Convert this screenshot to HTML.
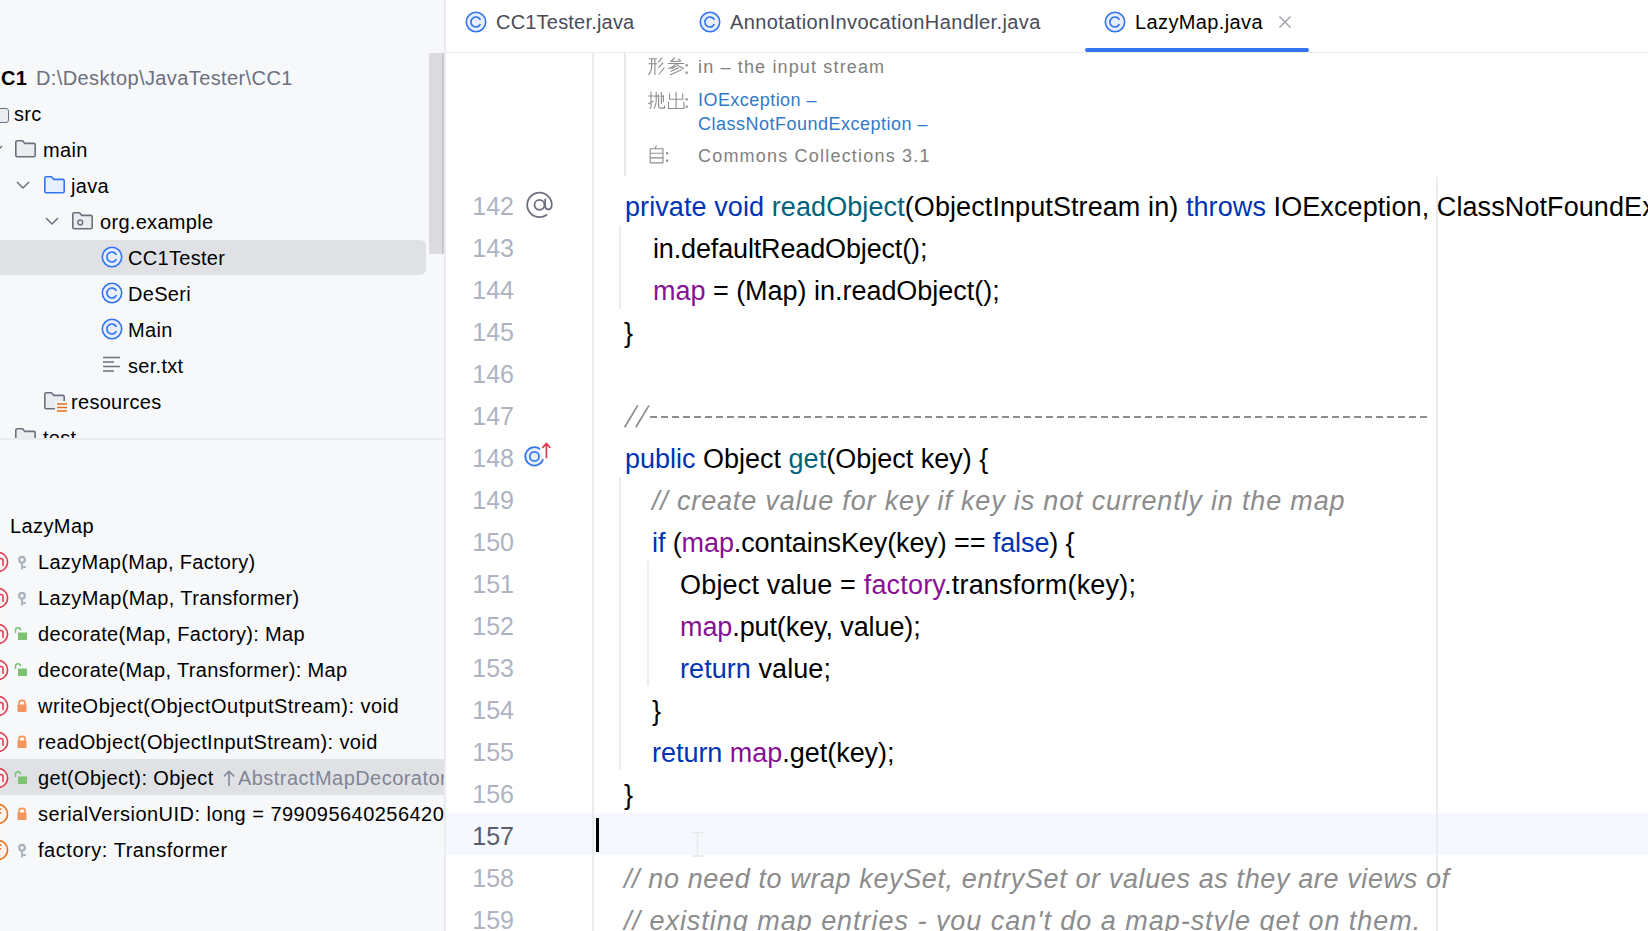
<!DOCTYPE html><html><head><meta charset="utf-8"><style>
html,body{margin:0;padding:0;}
body{width:1648px;height:931px;overflow:hidden;position:relative;background:#ffffff;font-family:'Liberation Sans', sans-serif;}
.a{position:absolute;}
</style></head><body>
<div class="a" style="left:0;top:0;width:444px;height:931px;background:#f7f8fa;overflow:hidden">
<div class="a" style="left:0;top:0;width:444px;height:438px;overflow:hidden">
<div class="a" style="left:-10px;top:240px;width:436px;height:35px;background:#dfe1e5;border-radius:6px"></div>
<div style="position:absolute;left:1px;top:66.90px;font-family:'Liberation Sans', sans-serif;font-size:20px;line-height:23.00px;color:#000;white-space:pre;letter-spacing:0.2px;font-weight:bold;">C1</div>
<div style="position:absolute;left:36px;top:66.90px;font-family:'Liberation Sans', sans-serif;font-size:20px;line-height:23.00px;color:#6c707e;white-space:pre;letter-spacing:0.4px;">D:\Desktop\JavaTester\CC1</div>
<div class="a" style="left:-12px;top:108px;width:19px;height:13px;border:1.6px solid #6c707e;border-radius:3px;background:#ebecf0"></div>
<div style="position:absolute;left:14px;top:102.90px;font-family:'Liberation Sans', sans-serif;font-size:20px;line-height:23.00px;color:#000;white-space:pre;letter-spacing:0.3px;">src</div>
<svg class="a" style="left:-11px;top:144px" width="14" height="10"><path d="M1 2 L7 8 L13 2" fill="none" stroke="#6c707e" stroke-width="1.5"/></svg>
<svg class="a" style="left:14px;top:139px" width="23" height="19.5" viewBox="0 0 23 19.5"><path d="M1.8 3.2 Q1.8 1.8 3.2 1.8 L8.6 1.8 L10.8 4.4 L19.8 4.4 Q21.2 4.4 21.2 5.8 L21.2 16.3 Q21.2 17.7 19.8 17.7 L3.2 17.7 Q1.8 17.7 1.8 16.3 Z" fill="#ebecf0" stroke="#6c707e" stroke-width="1.6" stroke-linejoin="round"/></svg>
<div style="position:absolute;left:43px;top:138.90px;font-family:'Liberation Sans', sans-serif;font-size:20px;line-height:23.00px;color:#000;white-space:pre;letter-spacing:0.3px;">main</div>
<svg class="a" style="left:16px;top:180px" width="14" height="10"><path d="M1 2 L7 8 L13 2" fill="none" stroke="#6c707e" stroke-width="1.5"/></svg>
<svg class="a" style="left:43px;top:175px" width="23" height="19.5" viewBox="0 0 23 19.5"><path d="M1.8 3.2 Q1.8 1.8 3.2 1.8 L8.6 1.8 L10.8 4.4 L19.8 4.4 Q21.2 4.4 21.2 5.8 L21.2 16.3 Q21.2 17.7 19.8 17.7 L3.2 17.7 Q1.8 17.7 1.8 16.3 Z" fill="#e7effd" stroke="#3574f0" stroke-width="1.6" stroke-linejoin="round"/></svg>
<div style="position:absolute;left:71px;top:174.90px;font-family:'Liberation Sans', sans-serif;font-size:20px;line-height:23.00px;color:#000;white-space:pre;letter-spacing:0.3px;">java</div>
<svg class="a" style="left:45px;top:216px" width="14" height="10"><path d="M1 2 L7 8 L13 2" fill="none" stroke="#6c707e" stroke-width="1.5"/></svg>
<svg class="a" style="left:71px;top:211px" width="23" height="19.5" viewBox="0 0 23 19.5"><path d="M1.8 3.2 Q1.8 1.8 3.2 1.8 L8.6 1.8 L10.8 4.4 L19.8 4.4 Q21.2 4.4 21.2 5.8 L21.2 16.3 Q21.2 17.7 19.8 17.7 L3.2 17.7 Q1.8 17.7 1.8 16.3 Z" fill="#ebecf0" stroke="#6c707e" stroke-width="1.6" stroke-linejoin="round"/></svg>
<svg class="a" style="left:76px;top:218px" width="9" height="9"><circle cx="4.3" cy="4.4" r="2.4" fill="none" stroke="#6c707e" stroke-width="1.4"/></svg>
<div style="position:absolute;left:100px;top:210.90px;font-family:'Liberation Sans', sans-serif;font-size:20px;line-height:23.00px;color:#000;white-space:pre;letter-spacing:0.3px;">org.example</div>
<svg style="position:absolute;left:100px;top:245px" width="24" height="24" viewBox="0 0 24 24"><circle cx="12" cy="12" r="9.7" fill="#e7effd" stroke="#3574f0" stroke-width="1.6"/><path d="M16.4 9.8 A5 5 0 1 0 16.4 14.2" fill="none" stroke="#3574f0" stroke-width="1.6"/></svg>
<div style="position:absolute;left:128px;top:246.90px;font-family:'Liberation Sans', sans-serif;font-size:20px;line-height:23.00px;color:#000;white-space:pre;letter-spacing:0.3px;">CC1Tester</div>
<svg style="position:absolute;left:100px;top:281px" width="24" height="24" viewBox="0 0 24 24"><circle cx="12" cy="12" r="9.7" fill="#e7effd" stroke="#3574f0" stroke-width="1.6"/><path d="M16.4 9.8 A5 5 0 1 0 16.4 14.2" fill="none" stroke="#3574f0" stroke-width="1.6"/></svg>
<div style="position:absolute;left:128px;top:282.90px;font-family:'Liberation Sans', sans-serif;font-size:20px;line-height:23.00px;color:#000;white-space:pre;letter-spacing:0.3px;">DeSeri</div>
<svg style="position:absolute;left:100px;top:317px" width="24" height="24" viewBox="0 0 24 24"><circle cx="12" cy="12" r="9.7" fill="#e7effd" stroke="#3574f0" stroke-width="1.6"/><path d="M16.4 9.8 A5 5 0 1 0 16.4 14.2" fill="none" stroke="#3574f0" stroke-width="1.6"/></svg>
<div style="position:absolute;left:128px;top:318.90px;font-family:'Liberation Sans', sans-serif;font-size:20px;line-height:23.00px;color:#000;white-space:pre;letter-spacing:0.3px;">Main</div>
<svg class="a" style="left:100px;top:354px" width="24" height="22"><path d="M3 3.5 H20 M3 8 H14 M3 12.5 H20 M3 17 H14" stroke="#6c707e" stroke-width="1.5"/></svg>
<div style="position:absolute;left:128px;top:354.90px;font-family:'Liberation Sans', sans-serif;font-size:20px;line-height:23.00px;color:#000;white-space:pre;letter-spacing:0.3px;">ser.txt</div>
<svg class="a" style="left:43px;top:391px" width="23" height="19.5" viewBox="0 0 23 19.5"><path d="M1.8 3.2 Q1.8 1.8 3.2 1.8 L8.6 1.8 L10.8 4.4 L19.8 4.4 Q21.2 4.4 21.2 5.8 L21.2 16.3 Q21.2 17.7 19.8 17.7 L3.2 17.7 Q1.8 17.7 1.8 16.3 Z" fill="#ebecf0" stroke="#6c707e" stroke-width="1.6" stroke-linejoin="round"/></svg>
<svg class="a" style="left:55px;top:401px" width="14" height="12"><rect x="0" y="0" width="14" height="12" fill="#f7f8fa"/><path d="M2 3 H12 M2 6.5 H12 M2 10 H12" stroke="#e66d17" stroke-width="1.5"/></svg>
<div style="position:absolute;left:71px;top:390.90px;font-family:'Liberation Sans', sans-serif;font-size:20px;line-height:23.00px;color:#000;white-space:pre;letter-spacing:0.3px;">resources</div>
<svg class="a" style="left:14px;top:427px" width="23" height="19.5" viewBox="0 0 23 19.5"><path d="M1.8 3.2 Q1.8 1.8 3.2 1.8 L8.6 1.8 L10.8 4.4 L19.8 4.4 Q21.2 4.4 21.2 5.8 L21.2 16.3 Q21.2 17.7 19.8 17.7 L3.2 17.7 Q1.8 17.7 1.8 16.3 Z" fill="#ebecf0" stroke="#6c707e" stroke-width="1.6" stroke-linejoin="round"/></svg>
<div style="position:absolute;left:43px;top:426.90px;font-family:'Liberation Sans', sans-serif;font-size:20px;line-height:23.00px;color:#000;white-space:pre;letter-spacing:0.3px;">test</div>
<div class="a" style="left:429px;top:53px;width:13px;height:201px;background:#dcdcdf;border-right:2px solid #c9c9cc"></div>
</div>
<div class="a" style="left:0;top:438px;width:444px;height:2px;background:#ebecf0"></div>
<div style="position:absolute;left:10px;top:514.90px;font-family:'Liberation Sans', sans-serif;font-size:20px;line-height:23.00px;color:#000;white-space:pre;letter-spacing:0.4px;">LazyMap</div>
<div class="a" style="left:0;top:759px;width:444px;height:36px;background:#dfe1e5"></div>
<svg class="a" style="left:-14px;top:550px" width="24" height="24"><circle cx="12" cy="12" r="9.6" fill="#fff2f3" stroke="#db3b4b" stroke-width="1.6"/><path d="M8 16 V9 M8 10.5 Q8 8.6 10.3 8.6 Q12.5 8.6 12.5 10.5 V16 M12.5 10.5 Q12.5 8.6 14.8 8.6 Q17 8.6 17 10.5 V16" fill="none" stroke="#db3b4b" stroke-width="1.5"/></svg>
<svg class="a" style="left:16px;top:554px" width="12" height="16"><circle cx="6" cy="5.7" r="2.8" fill="none" stroke="#a9b3bd" stroke-width="2.2"/><path d="M6 8 V15.4 M6 12.9 H9.8" stroke="#a9b3bd" stroke-width="2"/></svg>
<div style="position:absolute;left:38px;top:550.90px;font-family:'Liberation Sans', sans-serif;font-size:20px;line-height:23.00px;color:#000;white-space:pre;letter-spacing:0.3px;">LazyMap(Map, Factory)</div>
<svg class="a" style="left:-14px;top:586px" width="24" height="24"><circle cx="12" cy="12" r="9.6" fill="#fff2f3" stroke="#db3b4b" stroke-width="1.6"/><path d="M8 16 V9 M8 10.5 Q8 8.6 10.3 8.6 Q12.5 8.6 12.5 10.5 V16 M12.5 10.5 Q12.5 8.6 14.8 8.6 Q17 8.6 17 10.5 V16" fill="none" stroke="#db3b4b" stroke-width="1.5"/></svg>
<svg class="a" style="left:16px;top:590px" width="12" height="16"><circle cx="6" cy="5.7" r="2.8" fill="none" stroke="#a9b3bd" stroke-width="2.2"/><path d="M6 8 V15.4 M6 12.9 H9.8" stroke="#a9b3bd" stroke-width="2"/></svg>
<div style="position:absolute;left:38px;top:586.90px;font-family:'Liberation Sans', sans-serif;font-size:20px;line-height:23.00px;color:#000;white-space:pre;letter-spacing:0.37px;">LazyMap(Map, Transformer)</div>
<svg class="a" style="left:-14px;top:622px" width="24" height="24"><circle cx="12" cy="12" r="9.6" fill="#fff2f3" stroke="#db3b4b" stroke-width="1.6"/><path d="M8 16 V9 M8 10.5 Q8 8.6 10.3 8.6 Q12.5 8.6 12.5 10.5 V16 M12.5 10.5 Q12.5 8.6 14.8 8.6 Q17 8.6 17 10.5 V16" fill="none" stroke="#db3b4b" stroke-width="1.5"/></svg>
<svg class="a" style="left:13px;top:626px" width="16" height="16"><path d="M2.5 7 V4.2 Q2.5 1.7 5 1.7 Q7.5 1.7 7.5 4.2" fill="none" stroke="#7dc173" stroke-width="1.5"/><rect x="5" y="6.5" width="9" height="7.5" fill="#7dc173"/></svg>
<div style="position:absolute;left:38px;top:622.90px;font-family:'Liberation Sans', sans-serif;font-size:20px;line-height:23.00px;color:#000;white-space:pre;letter-spacing:0.34px;">decorate(Map, Factory): Map</div>
<svg class="a" style="left:-14px;top:658px" width="24" height="24"><circle cx="12" cy="12" r="9.6" fill="#fff2f3" stroke="#db3b4b" stroke-width="1.6"/><path d="M8 16 V9 M8 10.5 Q8 8.6 10.3 8.6 Q12.5 8.6 12.5 10.5 V16 M12.5 10.5 Q12.5 8.6 14.8 8.6 Q17 8.6 17 10.5 V16" fill="none" stroke="#db3b4b" stroke-width="1.5"/></svg>
<svg class="a" style="left:13px;top:662px" width="16" height="16"><path d="M2.5 7 V4.2 Q2.5 1.7 5 1.7 Q7.5 1.7 7.5 4.2" fill="none" stroke="#7dc173" stroke-width="1.5"/><rect x="5" y="6.5" width="9" height="7.5" fill="#7dc173"/></svg>
<div style="position:absolute;left:38px;top:658.90px;font-family:'Liberation Sans', sans-serif;font-size:20px;line-height:23.00px;color:#000;white-space:pre;letter-spacing:0.34px;">decorate(Map, Transformer): Map</div>
<svg class="a" style="left:-14px;top:694px" width="24" height="24"><circle cx="12" cy="12" r="9.6" fill="#fff2f3" stroke="#db3b4b" stroke-width="1.6"/><path d="M8 16 V9 M8 10.5 Q8 8.6 10.3 8.6 Q12.5 8.6 12.5 10.5 V16 M12.5 10.5 Q12.5 8.6 14.8 8.6 Q17 8.6 17 10.5 V16" fill="none" stroke="#db3b4b" stroke-width="1.5"/></svg>
<svg class="a" style="left:15px;top:698px" width="14" height="16"><path d="M4 7 V4.8 Q4 2.4 7 2.4 Q10 2.4 10 4.8 V7" fill="none" stroke="#f2945e" stroke-width="1.6"/><rect x="2.5" y="6.5" width="9" height="7.5" rx="0.8" fill="#f2945e"/></svg>
<div style="position:absolute;left:38px;top:694.90px;font-family:'Liberation Sans', sans-serif;font-size:20px;line-height:23.00px;color:#000;white-space:pre;letter-spacing:0.475px;">writeObject(ObjectOutputStream): void</div>
<svg class="a" style="left:-14px;top:730px" width="24" height="24"><circle cx="12" cy="12" r="9.6" fill="#fff2f3" stroke="#db3b4b" stroke-width="1.6"/><path d="M8 16 V9 M8 10.5 Q8 8.6 10.3 8.6 Q12.5 8.6 12.5 10.5 V16 M12.5 10.5 Q12.5 8.6 14.8 8.6 Q17 8.6 17 10.5 V16" fill="none" stroke="#db3b4b" stroke-width="1.5"/></svg>
<svg class="a" style="left:15px;top:734px" width="14" height="16"><path d="M4 7 V4.8 Q4 2.4 7 2.4 Q10 2.4 10 4.8 V7" fill="none" stroke="#f2945e" stroke-width="1.6"/><rect x="2.5" y="6.5" width="9" height="7.5" rx="0.8" fill="#f2945e"/></svg>
<div style="position:absolute;left:38px;top:730.90px;font-family:'Liberation Sans', sans-serif;font-size:20px;line-height:23.00px;color:#000;white-space:pre;letter-spacing:0.4px;">readObject(ObjectInputStream): void</div>
<svg class="a" style="left:-14px;top:766px" width="24" height="24"><circle cx="12" cy="12" r="9.6" fill="#fff2f3" stroke="#db3b4b" stroke-width="1.6"/><path d="M8 16 V9 M8 10.5 Q8 8.6 10.3 8.6 Q12.5 8.6 12.5 10.5 V16 M12.5 10.5 Q12.5 8.6 14.8 8.6 Q17 8.6 17 10.5 V16" fill="none" stroke="#db3b4b" stroke-width="1.5"/></svg>
<svg class="a" style="left:13px;top:770px" width="16" height="16"><path d="M2.5 7 V4.2 Q2.5 1.7 5 1.7 Q7.5 1.7 7.5 4.2" fill="none" stroke="#7dc173" stroke-width="1.5"/><rect x="5" y="6.5" width="9" height="7.5" fill="#7dc173"/></svg>
<div style="position:absolute;left:38px;top:766.90px;font-family:'Liberation Sans', sans-serif;font-size:20px;line-height:23.00px;color:#000;white-space:pre;letter-spacing:0.41px;">get(Object): Object</div>
<svg class="a" style="left:-14px;top:802px" width="24" height="24"><circle cx="12" cy="12" r="9.6" fill="#fff4eb" stroke="#e66d17" stroke-width="1.6"/><path d="M15.5 7.2 Q12 6.6 12 10 V16.5 M9 10.8 H15.2" fill="none" stroke="#e66d17" stroke-width="1.5"/></svg>
<svg class="a" style="left:15px;top:806px" width="14" height="16"><path d="M4 7 V4.8 Q4 2.4 7 2.4 Q10 2.4 10 4.8 V7" fill="none" stroke="#f2945e" stroke-width="1.6"/><rect x="2.5" y="6.5" width="9" height="7.5" rx="0.8" fill="#f2945e"/></svg>
<div style="position:absolute;left:38px;top:802.90px;font-family:'Liberation Sans', sans-serif;font-size:20px;line-height:23.00px;color:#000;white-space:pre;letter-spacing:0.47px;">serialVersionUID: long = 799095640256420</div>
<svg class="a" style="left:-14px;top:838px" width="24" height="24"><circle cx="12" cy="12" r="9.6" fill="#fff4eb" stroke="#e66d17" stroke-width="1.6"/><path d="M15.5 7.2 Q12 6.6 12 10 V16.5 M9 10.8 H15.2" fill="none" stroke="#e66d17" stroke-width="1.5"/></svg>
<svg class="a" style="left:16px;top:842px" width="12" height="16"><circle cx="6" cy="5.7" r="2.8" fill="none" stroke="#a9b3bd" stroke-width="2.2"/><path d="M6 8 V15.4 M6 12.9 H9.8" stroke="#a9b3bd" stroke-width="2"/></svg>
<div style="position:absolute;left:38px;top:838.90px;font-family:'Liberation Sans', sans-serif;font-size:20px;line-height:23.00px;color:#000;white-space:pre;letter-spacing:0.54px;">factory: Transformer</div>
<svg class="a" style="left:222px;top:769px" width="14" height="18"><path d="M7 17 V2.5 M1.8 7.5 L7 2.3 L12.2 7.5" fill="none" stroke="#818594" stroke-width="1.5"/></svg>
<div style="position:absolute;left:238px;top:766.90px;font-family:'Liberation Sans', sans-serif;font-size:20px;line-height:23.00px;color:#818594;white-space:pre;letter-spacing:0.45px;">AbstractMapDecorator</div>
</div>
<div class="a" style="left:444px;top:0;width:2px;height:931px;background:#ebecf0"></div>
<div class="a" style="left:446px;top:0;width:1202px;height:52px;background:#fff"></div>
<div class="a" style="left:446px;top:52px;width:1202px;height:1px;background:#ebecf0"></div>
<svg style="position:absolute;left:464px;top:10px" width="24" height="24" viewBox="0 0 24 24"><circle cx="12" cy="12" r="9.7" fill="#e7effd" stroke="#3574f0" stroke-width="1.6"/><path d="M16.4 9.8 A5 5 0 1 0 16.4 14.2" fill="none" stroke="#3574f0" stroke-width="1.6"/></svg>
<div style="position:absolute;left:496px;top:10.90px;font-family:'Liberation Sans', sans-serif;font-size:20px;line-height:23.00px;color:#494b57;white-space:pre;letter-spacing:0.2px;">CC1Tester.java</div>
<svg style="position:absolute;left:698px;top:10px" width="24" height="24" viewBox="0 0 24 24"><circle cx="12" cy="12" r="9.7" fill="#e7effd" stroke="#3574f0" stroke-width="1.6"/><path d="M16.4 9.8 A5 5 0 1 0 16.4 14.2" fill="none" stroke="#3574f0" stroke-width="1.6"/></svg>
<div style="position:absolute;left:730px;top:10.90px;font-family:'Liberation Sans', sans-serif;font-size:20px;line-height:23.00px;color:#494b57;white-space:pre;letter-spacing:0.4px;">AnnotationInvocationHandler.java</div>
<svg style="position:absolute;left:1103px;top:10px" width="24" height="24" viewBox="0 0 24 24"><circle cx="12" cy="12" r="9.7" fill="#e7effd" stroke="#3574f0" stroke-width="1.6"/><path d="M16.4 9.8 A5 5 0 1 0 16.4 14.2" fill="none" stroke="#3574f0" stroke-width="1.6"/></svg>
<div style="position:absolute;left:1135px;top:10.90px;font-family:'Liberation Sans', sans-serif;font-size:20px;line-height:23.00px;color:#000;white-space:pre;letter-spacing:0.38px;">LazyMap.java</div>
<svg class="a" style="left:1277px;top:14px" width="16" height="16"><path d="M2.5 2.5 L13.5 13.5 M13.5 2.5 L2.5 13.5" stroke="#9a9ea9" stroke-width="1.4"/></svg>
<div class="a" style="left:1085px;top:48px;width:224px;height:4px;background:#3574f0;border-radius:2px"></div>
<div class="a" style="left:446px;top:813px;width:1202px;height:42px;background:#f5f8fe"></div>
<div class="a" style="left:592px;top:53px;width:2px;height:878px;background:#ebecf0"></div>
<div class="a" style="left:1436px;top:177px;width:2px;height:754px;background:#ebecf0"></div>
<div class="a" style="left:624px;top:53px;width:2px;height:123px;background:#e6e7eb"></div>
<div style="position:absolute;left:698px;top:56.71px;font-family:'Liberation Sans', sans-serif;font-size:18px;line-height:20.70px;color:#808080;white-space:pre;letter-spacing:1.15px;">in – the input stream</div>
<div style="position:absolute;left:698px;top:89.71px;font-family:'Liberation Sans', sans-serif;font-size:18px;line-height:20.70px;color:#2f7ac9;white-space:pre;letter-spacing:0.45px;">IOException –</div>
<div style="position:absolute;left:698px;top:113.71px;font-family:'Liberation Sans', sans-serif;font-size:18px;line-height:20.70px;color:#2f7ac9;white-space:pre;letter-spacing:0.5px;">ClassNotFoundException –</div>
<div style="position:absolute;left:698px;top:145.71px;font-family:'Liberation Sans', sans-serif;font-size:18px;line-height:20.70px;color:#808080;white-space:pre;letter-spacing:1.2px;">Commons Collections 3.1</div>
<svg class="a" style="left:648px;top:57px" width="44" height="19"><g fill="none" stroke="#8c8c8c" stroke-width="1.1"><path transform="translate(0.0,0.5)" d="M0.8 1.2 H9 M0.3 6.2 H9.2 M3.6 1.2 V9.5 Q3.4 14.5 0.4 17.4 M6.9 1.2 V17.5 M14.2 0.2 L10.2 4.8 M15.2 5.2 L10.4 10.2 M16.4 10 L10.8 17"/><path transform="translate(19.5,0.5)" d="M7.2 0.2 L3.4 4 L12.8 3.6 M10.6 1.4 L13.6 3.6 M0.4 6 H16.6 M8.2 6 Q6 9.5 0.8 11.2 M8.8 6 Q11.5 9.8 16.5 11 M9.4 8.2 L4 11.2 M11.4 10.2 L3 14 M14.4 12 L2.4 17.4"/></g><rect x="37.5" y="7.2" width="2.2" height="2.2" fill="#8c8c8c"/><rect x="37.5" y="14.6" width="2.2" height="2.2" fill="#8c8c8c"/></svg>
<svg class="a" style="left:648px;top:91px" width="44" height="19"><g fill="none" stroke="#8c8c8c" stroke-width="1.1"><path transform="translate(0.0,0.5)" d="M0.3 4.5 H5.6 M3 0.2 V15.6 Q3 17.2 1.6 16.6 M0.2 12.2 L5.6 9.4 M6 4.6 H10 M8.2 0.4 V9 Q8 14.5 5.8 17 M10.6 3 V14.8 Q10.6 16.6 12.4 16.6 H16.6 V14 M13.4 0.6 V12.4 M12.2 5.6 L15.4 4.4 V10.6"/><path transform="translate(19.5,0.5)" d="M8.6 0.2 V17.4 M2 2 V7.8 H15.2 V2 M1 10.2 V17 H16.4 V10.2"/></g><rect x="37.5" y="7.2" width="2.2" height="2.2" fill="#8c8c8c"/><rect x="37.5" y="14.6" width="2.2" height="2.2" fill="#8c8c8c"/></svg>
<svg class="a" style="left:648px;top:145px" width="44" height="19"><g fill="none" stroke="#8c8c8c" stroke-width="1.1"><path transform="translate(0.0,0.5)" d="M8.6 0.2 L7 2.6 M2.2 3.2 H15 V17.4 M2.2 3.2 V17.4 H15 M2.2 7.8 H15 M2.2 12.4 H15"/></g><rect x="18.0" y="7.2" width="2.2" height="2.2" fill="#8c8c8c"/><rect x="18.0" y="14.6" width="2.2" height="2.2" fill="#8c8c8c"/></svg>
<div class="a" style="left:619px;top:225px;width:2px;height:84px;background:#ebecf0"></div>
<div class="a" style="left:619px;top:477px;width:2px;height:293px;background:#ebecf0"></div>
<div class="a" style="left:647px;top:561px;width:2px;height:125px;background:#ebecf0"></div>
<div class="a" style="left:400px;width:114px;text-align:right;top:192.38px;font-size:25px;line-height:29px;color:#aeb3c2;letter-spacing:0px">142</div>
<div class="a" style="left:400px;width:114px;text-align:right;top:234.38px;font-size:25px;line-height:29px;color:#aeb3c2;letter-spacing:0px">143</div>
<div class="a" style="left:400px;width:114px;text-align:right;top:276.38px;font-size:25px;line-height:29px;color:#aeb3c2;letter-spacing:0px">144</div>
<div class="a" style="left:400px;width:114px;text-align:right;top:318.38px;font-size:25px;line-height:29px;color:#aeb3c2;letter-spacing:0px">145</div>
<div class="a" style="left:400px;width:114px;text-align:right;top:360.38px;font-size:25px;line-height:29px;color:#aeb3c2;letter-spacing:0px">146</div>
<div class="a" style="left:400px;width:114px;text-align:right;top:402.38px;font-size:25px;line-height:29px;color:#aeb3c2;letter-spacing:0px">147</div>
<div class="a" style="left:400px;width:114px;text-align:right;top:444.38px;font-size:25px;line-height:29px;color:#aeb3c2;letter-spacing:0px">148</div>
<div class="a" style="left:400px;width:114px;text-align:right;top:486.38px;font-size:25px;line-height:29px;color:#aeb3c2;letter-spacing:0px">149</div>
<div class="a" style="left:400px;width:114px;text-align:right;top:528.38px;font-size:25px;line-height:29px;color:#aeb3c2;letter-spacing:0px">150</div>
<div class="a" style="left:400px;width:114px;text-align:right;top:570.38px;font-size:25px;line-height:29px;color:#aeb3c2;letter-spacing:0px">151</div>
<div class="a" style="left:400px;width:114px;text-align:right;top:612.38px;font-size:25px;line-height:29px;color:#aeb3c2;letter-spacing:0px">152</div>
<div class="a" style="left:400px;width:114px;text-align:right;top:654.38px;font-size:25px;line-height:29px;color:#aeb3c2;letter-spacing:0px">153</div>
<div class="a" style="left:400px;width:114px;text-align:right;top:696.38px;font-size:25px;line-height:29px;color:#aeb3c2;letter-spacing:0px">154</div>
<div class="a" style="left:400px;width:114px;text-align:right;top:738.38px;font-size:25px;line-height:29px;color:#aeb3c2;letter-spacing:0px">155</div>
<div class="a" style="left:400px;width:114px;text-align:right;top:780.38px;font-size:25px;line-height:29px;color:#aeb3c2;letter-spacing:0px">156</div>
<div class="a" style="left:400px;width:114px;text-align:right;top:822.38px;font-size:25px;line-height:29px;color:#5a5d6b;letter-spacing:0px">157</div>
<div class="a" style="left:400px;width:114px;text-align:right;top:864.38px;font-size:25px;line-height:29px;color:#aeb3c2;letter-spacing:0px">158</div>
<div class="a" style="left:400px;width:114px;text-align:right;top:906.38px;font-size:25px;line-height:29px;color:#aeb3c2;letter-spacing:0px">159</div>
<div id="L142" class="a" style="left:625px;top:191.56px;font-size:27.0px;line-height:31.05px;white-space:pre;letter-spacing:0.09px"><span style="color:#0033b3;">private </span><span style="color:#0033b3;">void </span><span style="color:#00627a;">readObject</span><span style="color:#000000;">(ObjectInputStream in) </span><span style="color:#0033b3;">throws </span><span style="color:#000000;">IOException, ClassNotFoundException</span></div>
<div id="L143" class="a" style="left:653px;top:233.56px;font-size:27.0px;line-height:31.05px;white-space:pre;letter-spacing:-0.147px"><span style="color:#000000;">in.defaultReadObject();</span></div>
<div id="L144" class="a" style="left:653px;top:275.56px;font-size:27.0px;line-height:31.05px;white-space:pre;letter-spacing:-0.026px"><span style="color:#871094;">map</span><span style="color:#000000;"> = (Map) in.readObject();</span></div>
<div id="L145" class="a" style="left:624px;top:317.56px;font-size:27.0px;line-height:31.05px;white-space:pre;letter-spacing:0.3px"><span style="color:#000000;">}</span></div>
<div id="L148" class="a" style="left:625px;top:443.56px;font-size:27.0px;line-height:31.05px;white-space:pre;letter-spacing:0.0px"><span style="color:#0033b3;">public </span><span style="color:#000000;">Object </span><span style="color:#00627a;">get</span><span style="color:#000000;">(Object key) {</span></div>
<div id="L149" class="a" style="left:652px;top:485.56px;font-size:27.0px;line-height:31.05px;white-space:pre;letter-spacing:0.829px"><span style="color:#8c8c8c;font-style:italic;">// create value for key if key is not currently in the map</span></div>
<div id="L150" class="a" style="left:652px;top:527.57px;font-size:27.0px;line-height:31.05px;white-space:pre;letter-spacing:-0.103px"><span style="color:#0033b3;">if </span><span style="color:#000000;">(</span><span style="color:#871094;">map</span><span style="color:#000000;">.containsKey(key) == </span><span style="color:#0033b3;">false</span><span style="color:#000000;">) {</span></div>
<div id="L151" class="a" style="left:680px;top:569.57px;font-size:27.0px;line-height:31.05px;white-space:pre;letter-spacing:0.19px"><span style="color:#000000;">Object value = </span><span style="color:#871094;">factory</span><span style="color:#000000;">.transform(key);</span></div>
<div id="L152" class="a" style="left:680px;top:611.57px;font-size:27.0px;line-height:31.05px;white-space:pre;letter-spacing:-0.101px"><span style="color:#871094;">map</span><span style="color:#000000;">.put(key, value);</span></div>
<div id="L153" class="a" style="left:680px;top:653.57px;font-size:27.0px;line-height:31.05px;white-space:pre;letter-spacing:0.068px"><span style="color:#0033b3;">return </span><span style="color:#000000;">value;</span></div>
<div id="L154" class="a" style="left:652px;top:695.57px;font-size:27.0px;line-height:31.05px;white-space:pre;letter-spacing:0.3px"><span style="color:#000000;">}</span></div>
<div id="L155" class="a" style="left:652px;top:737.57px;font-size:27.0px;line-height:31.05px;white-space:pre;letter-spacing:-0.029px"><span style="color:#0033b3;">return </span><span style="color:#871094;">map</span><span style="color:#000000;">.get(key);</span></div>
<div id="L156" class="a" style="left:624px;top:779.57px;font-size:27.0px;line-height:31.05px;white-space:pre;letter-spacing:0.3px"><span style="color:#000000;">}</span></div>
<div id="L158" class="a" style="left:624px;top:863.57px;font-size:27.0px;line-height:31.05px;white-space:pre;letter-spacing:0.617px"><span style="color:#8c8c8c;font-style:italic;">// no need to wrap keySet, entrySet or values as they are views of</span></div>
<div id="L159" class="a" style="left:624px;top:905.57px;font-size:27.0px;line-height:31.05px;white-space:pre;letter-spacing:0.972px"><span style="color:#8c8c8c;font-style:italic;">// existing map entries - you can&#x27;t do a map-style get on them.</span></div>
<div class="a" style="left:650px;top:416px;width:777px;height:2px;background:repeating-linear-gradient(90deg,#8c8c8c 0,#8c8c8c 7.3px,transparent 7.3px,transparent 11px)"></div>
<svg class="a" style="left:620px;top:400px" width="34" height="32"><path d="M4.6 27.2 L17.8 5.4 M15.8 27.2 L29 5.4" stroke="#8c8c8c" stroke-width="1.7"/></svg>
<svg class="a" style="left:524px;top:189px" width="32" height="32" viewBox="0 0 32 32"><path d="M22.5 26 Q19.5 28.2 15.5 28.2 A12.3 12.3 0 1 1 27.8 15.6 Q27.8 20.5 24.3 20.5 Q21.2 20.5 21.2 17 V10.5" fill="none" stroke="#6c707e" stroke-width="1.8" stroke-linecap="round"/><circle cx="15.5" cy="15.8" r="5" fill="none" stroke="#6c707e" stroke-width="1.8"/></svg>
<svg class="a" style="left:520px;top:440px" width="36" height="32" viewBox="0 0 36 32"><path d="M20.06 9.15 A9.2 9.2 0 1 0 23.15 19.24" fill="#e7effd" stroke="#3574f0" stroke-width="1.7"/><circle cx="14.4" cy="16.4" r="4.6" fill="#e7effd" stroke="#3574f0" stroke-width="1.7"/><path d="M26.4 18.2 V4 M22.4 7.8 L26.4 3.6 L30.4 7.8" fill="none" stroke="#db3b4b" stroke-width="1.7"/></svg>
<div class="a" style="left:596px;top:818px;width:3px;height:34px;background:#000"></div>
<svg class="a" style="left:690px;top:831px" width="16" height="27"><path d="M1 1.5 H14 M7.5 1.5 V25 M1 25 H14" stroke="#e8e8e8" stroke-width="1.5"/></svg>
</body></html>
